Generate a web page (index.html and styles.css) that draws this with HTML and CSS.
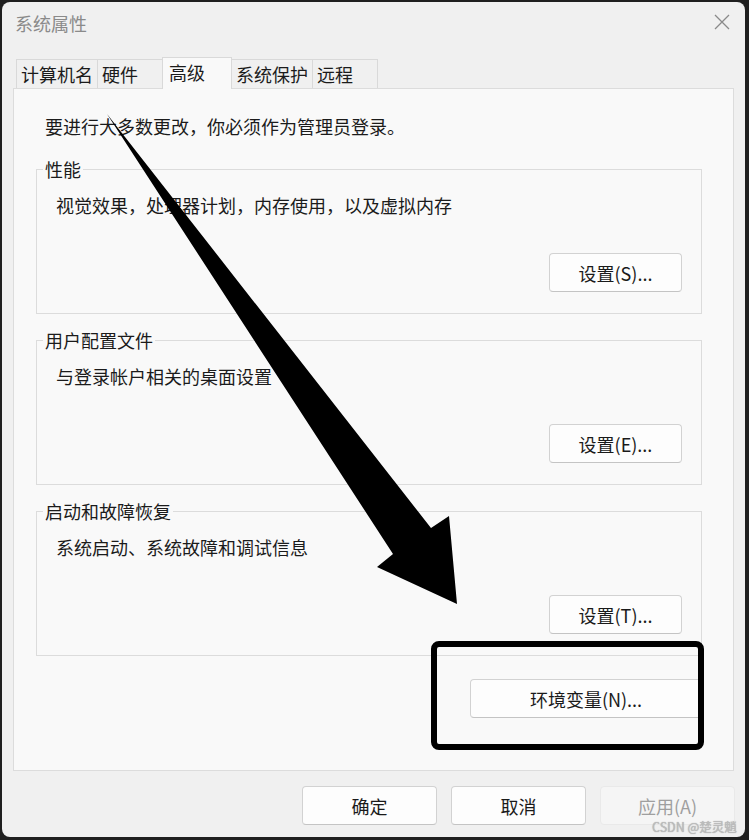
FILE: index.html
```html
<!DOCTYPE html>
<html lang="zh-CN">
<head>
<meta charset="utf-8">
<title>系统属性</title>
<link rel="stylesheet" href="styles.css">
</head>
<body>
<div class="window">
  <div class="titlebar">
    <span class="title">系统属性</span>
    <svg class="close" width="16" height="16" viewBox="0 0 16 16"><path d="M1 1 L15 15 M15 1 L1 15" stroke="#8a8a8a" stroke-width="1.3" fill="none"/></svg>
  </div>
  <div class="tabs">
    <div class="tab">计算机名</div>
    <div class="tab">硬件</div>
    <div class="tab tab-active">高级</div>
    <div class="tab">系统保护</div>
    <div class="tab">远程</div>
  </div>
  <div class="panel">
    <p class="note">要进行大多数更改，你必须作为管理员登录。</p>

    <section class="group">
      <div class="group-head"><span class="gh-left"></span><span class="gh-label">性能</span><span class="gh-right"></span></div>
      <div class="group-body">
        <p class="desc">视觉效果，处理器计划，内存使用，以及虚拟内存</p>
        <div class="btn-row"><button class="btn btn-set">设置(S)...</button></div>
      </div>
    </section>

    <section class="group">
      <div class="group-head"><span class="gh-left"></span><span class="gh-label">用户配置文件</span><span class="gh-right"></span></div>
      <div class="group-body">
        <p class="desc">与登录帐户相关的桌面设置</p>
        <div class="btn-row"><button class="btn btn-set">设置(E)...</button></div>
      </div>
    </section>

    <section class="group">
      <div class="group-head"><span class="gh-left"></span><span class="gh-label">启动和故障恢复</span><span class="gh-right"></span></div>
      <div class="group-body">
        <p class="desc">系统启动、系统故障和调试信息</p>
        <div class="btn-row"><button class="btn btn-set">设置(T)...</button></div>
      </div>
    </section>

    <div class="env-row"><button class="btn btn-env">环境变量(N)...</button></div>
  </div>
  <div class="footer">
    <button class="btn btn-foot">确定</button>
    <button class="btn btn-foot">取消</button>
    <button class="btn btn-foot btn-disabled">应用(A)</button>
  </div>
  <div class="highlight"></div>
</div>
<svg class="arrow" width="749" height="840" viewBox="0 0 749 840">
  <polygon fill="#000" points="107,114 431,528 449,516 457,604 377,567 393,554"/>
</svg>
<div class="watermark">CSDN @楚灵魈</div>
</body>
</html>
```
FILE: styles.css
```css
html, body {
  margin: 0;
  padding: 0;
}
body {
  width: 749px;
  height: 840px;
  overflow: hidden;
  background: #1f1f1f;
  position: relative;
  font-family: "Noto Sans CJK SC", "Noto Sans", sans-serif;
  font-size: 18px;
  color: #1b1b1b;
}
.window {
  position: relative;
  margin: 2px 0 0 2px;
  width: 743px;
  height: 835px;
  background: #f0f0f0;
  border-radius: 8px;
  box-sizing: border-box;
}
.titlebar {
  height: 55px;
  box-sizing: border-box;
  padding: 9px 15px 0 13px;
  display: flex;
  justify-content: space-between;
  align-items: flex-start;
}
.title {
  line-height: 24px;
  color: #8a8a8a;
}
.close {
  margin-top: 3px;
}
.tabs {
  height: 31px;
  display: flex;
  align-items: flex-end;
  padding-left: 15px;
}
.tab {
  height: 29px;
  min-width: 66px;
  box-sizing: border-box;
  border: 1px solid #d9d9d9;
  border-bottom: none;
  margin-left: -1px;
  padding: 0 4px;
  line-height: 29px;
  background: #f0f0f0;
}
.tab-active {
  height: 32px;
  min-width: 70px;
  padding: 0 6px;
  line-height: 28px;
  margin-bottom: -1px;
  background: #f9f9f9;
  position: relative;
  z-index: 1;
}
.panel {
  margin-left: 11px;
  width: 721px;
  height: 683px;
  box-sizing: border-box;
  border: 1px solid #dcdcdc;
  background: #f9f9f9;
  padding: 25px 31px 0 22px;
  display: flex;
  flex-direction: column;
}
.note {
  margin: 0 0 0 9px;
  line-height: 24px;
}
.group {
  margin-top: 19px;
}
.group + .group {
  margin-top: 14px;
}
.group-head {
  display: flex;
  height: 24px;
}
.gh-left {
  width: 7px;
  height: 12px;
  align-self: flex-end;
  border-top: 1px solid #dcdcdc;
  border-left: 1px solid #dcdcdc;
  box-sizing: border-box;
}
.gh-label {
  line-height: 24px;
  padding: 0 2px;
}
.gh-right {
  flex: 1;
  height: 12px;
  align-self: flex-end;
  border-top: 1px solid #dcdcdc;
  border-right: 1px solid #dcdcdc;
  box-sizing: border-box;
}
.group-body {
  border: 1px solid #dcdcdc;
  border-top: none;
  padding: 12px 19px 21px 19px;
}
.desc {
  margin: 0;
  line-height: 24px;
}
.btn-row {
  display: flex;
  justify-content: flex-end;
  margin-top: 36px;
}
.btn {
  font-family: "Noto Sans CJK SC", "Noto Sans", sans-serif;
  font-size: 18px;
  color: #1a1a1a;
  height: 39px;
  box-sizing: border-box;
  border: 1px solid #d2d2d2;
  border-bottom-color: #c4c4c4;
  border-radius: 4px;
  background: #fdfdfd;
  padding: 0;
  display: flex;
  align-items: center;
  justify-content: center;
}
.btn-set {
  width: 133px;
}
.env-row {
  display: flex;
  justify-content: flex-end;
  margin-top: 23px;
}
.btn-env {
  width: 232px;
}
.footer {
  display: flex;
  justify-content: flex-end;
  gap: 14px;
  padding-right: 10px;
  margin-top: 15px;
}
.btn-foot {
  width: 135px;
}
.btn-disabled {
  color: #9f9f9f;
  background: #f5f5f5;
  border-color: #e9e9e9;
}
.highlight {
  position: absolute;
  left: 429px;
  top: 639px;
  width: 273px;
  height: 109px;
  box-sizing: border-box;
  border: 6px solid #000;
  border-radius: 8px;
}
.arrow {
  position: absolute;
  left: 0;
  top: 0;
  pointer-events: none;
}
.watermark {
  position: absolute;
  left: 652px;
  top: 819px;
  font-size: 12.5px;
  line-height: 16px;
  color: #bdbdbd;
  text-shadow: 0 0 1px #9a9a9a;
  white-space: nowrap;
}
```
